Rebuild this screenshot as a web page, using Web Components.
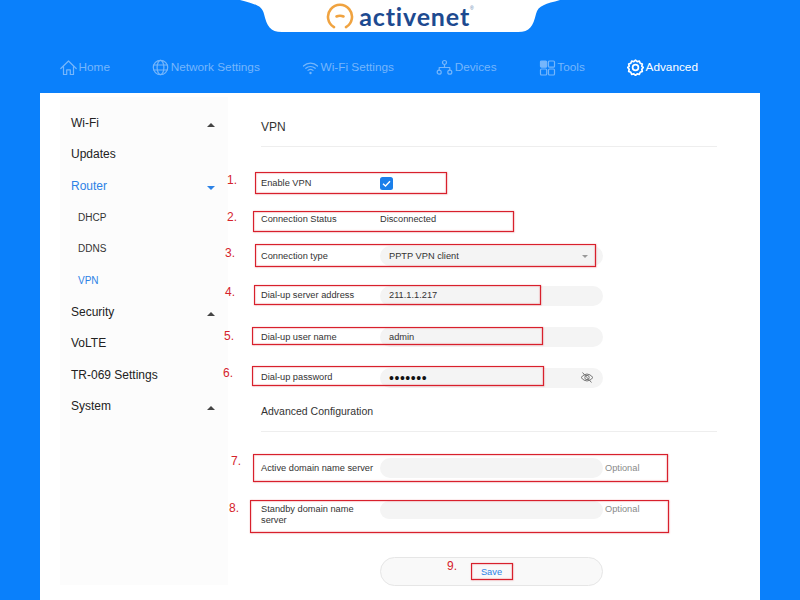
<!DOCTYPE html>
<html lang="en"><head><meta charset="utf-8"><title>activenet VPN</title>
<style>
html,body{margin:0;padding:0;width:800px;height:600px;overflow:hidden;background:#0a80fb;font-family:"Liberation Sans",Arial,sans-serif}
</style></head><body>
<router-page>
  <top-brand></top-brand>
  <top-nav>
    <nav-item icon="home">Home</nav-item>
    <nav-item icon="globe">Network Settings</nav-item>
    <nav-item icon="wifi">Wi-Fi Settings</nav-item>
    <nav-item icon="devices">Devices</nav-item>
    <nav-item icon="tools">Tools</nav-item>
    <nav-item icon="gear" active>Advanced</nav-item>
  </top-nav>
  <main-panel>
    <side-nav slot="side">
      <side-item caret="up">Wi-Fi</side-item>
      <side-item>Updates</side-item>
      <side-item caret="down" active>Router</side-item>
      <side-item sub>DHCP</side-item>
      <side-item sub>DDNS</side-item>
      <side-item sub active>VPN</side-item>
      <side-item caret="up">Security</side-item>
      <side-item>VoLTE</side-item>
      <side-item>TR-069 Settings</side-item>
      <side-item caret="up">System</side-item>
    </side-nav>
    <section-title style="margin-top:24px;height:29px;font-size:12px">VPN</section-title>
    <form-row style="margin-top:26px">Enable VPN<check-mark slot="control"></check-mark></form-row>
    <form-row style="margin-top:16px">Connection Status<span slot="control">Disconnected</span></form-row>
    <form-row style="margin-top:17px">Connection type<pill-field slot="control" value="PPTP VPN client" end="arrow"></pill-field></form-row>
    <form-row style="margin-top:19px;height:21px">Dial-up server address<pill-field slot="control" value="211.1.1.217"></pill-field></form-row>
    <form-row style="margin-top:21px">Dial-up user name<pill-field slot="control" value="admin"></pill-field></form-row>
    <form-row style="margin-top:20px;height:21px">Dial-up password<pill-field slot="control" value="•••••••" end="eye" secret></pill-field></form-row>
    <section-title style="margin-top:13px;height:30px;font-size:10.5px">Advanced Configuration</section-title>
    <form-row style="margin-top:26px">Active domain name server<pill-field slot="control"></pill-field><span slot="hint">Optional</span></form-row>
    <form-row top style="margin-top:23px;height:28px">Standby domain name server<pill-field slot="control" style="height:18px"></pill-field><span slot="hint">Optional</span></form-row>
    <save-button style="margin-top:28px">Save</save-button>
  </main-panel>
  <note-box style="left:255px;top:172px;width:192px;height:22px"></note-box>
  <note-box style="left:253px;top:211px;width:261px;height:21px"></note-box>
  <note-box style="left:255px;top:244px;width:341px;height:23px"></note-box>
  <note-box style="left:254px;top:285px;width:287px;height:20px"></note-box>
  <note-box style="left:252px;top:327px;width:291px;height:18px"></note-box>
  <note-box style="left:252px;top:366px;width:292px;height:20px"></note-box>
  <note-box style="left:253px;top:454px;width:415px;height:28px"></note-box>
  <note-box style="left:250px;top:500px;width:419px;height:33px"></note-box>
  <note-box style="left:471px;top:563px;width:42px;height:17px"></note-box>
  <note-num style="left:227px;top:173px">1.</note-num>
  <note-num style="left:227px;top:210px">2.</note-num>
  <note-num style="left:225px;top:246px">3.</note-num>
  <note-num style="left:225px;top:285px">4.</note-num>
  <note-num style="left:224px;top:329px">5.</note-num>
  <note-num style="left:223px;top:366px">6.</note-num>
  <note-num style="left:231px;top:454px">7.</note-num>
  <note-num style="left:229px;top:501px">8.</note-num>
  <note-num style="left:447px;top:559px">9.</note-num>
</router-page>
<script>
const ICONS={
home:'<path d="M.8 9.5 8.500 2 16.200 9.500"/><path d="M3.500 7.500v8h3.200v-4.600h3.600v4.600h3.200v-8"/>',
globe:'<circle cx="8.5" cy="8.5" r="7.2"/><ellipse cx="8.5" cy="8.5" rx="3.4" ry="7.2"/><path d="M1.800 6h13.400M1.800 11h13.400"/>',
wifi:'<path d="M1.500 7a10 10 0 0 1 14 0M3.800 9.300a7 7 0 0 1 9.400 0M6 11.400a4 4 0 0 1 5 0"/><circle cx="8.500" cy="14" r="1.200" fill="currentColor" stroke="none"/>',
devices:'<circle cx="8.500" cy="3.500" r="2"/><circle cx="3.200" cy="13.200" r="2"/><circle cx="13.800" cy="13.200" r="2"/><path d="M8.500 5.500v3M3.200 11.200V8.500h10.600v2.700"/>',
tools:'<rect x="1.500" y="2" width="6.200" height="6.200" rx="1" fill="currentColor"/><rect x="9.500" y="2" width="6" height="6.200" rx="1"/><rect x="1.500" y="10" width="6.200" height="6" rx="1"/><rect x="9.500" y="10" width="6" height="6" rx="1"/>',
gear:'<path stroke-width="1.700" d="M8.500 1.200l1.700 1.500 2.200-.5.800 2.100 2.100.8-.5 2.200 1.500 1.200-1.500 1.700.5 2.200-2.100.8-.8 2.100-2.200-.5-1.700 1.500-1.700-1.500-2.200.5-.8-2.100-2.100-.8.5-2.200L.7 8.500l1.500-1.200-.5-2.200 2.100-.8.800-2.100 2.200.5z"/><circle cx="8.500" cy="8.500" r="2.900" stroke-width="1.700"/>'
};
function def(name,css,html){
  customElements.define(name,class extends HTMLElement{
    constructor(){super();this.attachShadow({mode:'open'});}
    connectedCallback(){
      const body=typeof html==='function'?html(this):html;
      this.shadowRoot.innerHTML='<style>'+css+'</style>'+body;
    }
  });
}
def('router-page',':host{display:block;position:relative;width:800px;height:600px;overflow:hidden;background:#0a80fb}','<slot></slot>');
def('top-brand',`:host{display:flex;justify-content:center;height:32px}
.n{position:relative;width:320px;height:32px;display:flex;justify-content:center;align-items:center;gap:5px}
svg.bg{position:absolute;inset:0}
svg.m{position:relative}
b{position:relative;font:700 25px/32px "Lato","Liberation Sans",sans-serif;color:#1d4a90;letter-spacing:.85px}
i{position:relative;font:normal 5px/1 "Liberation Sans",sans-serif;color:#5a7ba8;margin:-16px 0 0 -5px}`,
`<div class="n"><svg class="bg" width="320" height="32" viewBox="0 0 320 32"><path fill="#fff" d="M0 0C14 4 22 5 24 14 27 26 30 32 42 32H278C290 32 293 26 296 14 298 5 306 4 320 0z"/></svg>
<svg class="m" width="28" height="28" viewBox="0 0 28 28" fill="none" stroke="#f0a340" stroke-width="2.600" stroke-linecap="round"><path d="M8 25.200A12 12 0 1 1 20 25.200"/><path d="M10.500 14.500q3.500-1.600 7 0"/></svg>
<b>activenet</b><i>®</i></div>`);
def('top-nav',':host{display:flex;justify-content:space-between;align-items:center;height:61px;padding:9px 102px 0 60px;box-sizing:border-box;width:800px}','<slot></slot>');
def('nav-item',`:host{display:flex;align-items:center;gap:1.5px;font-size:11.8px;color:#76b6fb;white-space:nowrap}
:host([active]){color:#fff}svg{display:block}`,
el=>`<svg width="17" height="17" viewBox="0 0 17 17" fill="none" stroke="currentColor" stroke-width="1.200" stroke-linejoin="round" stroke-linecap="round">${ICONS[el.getAttribute('icon')]}</svg><slot></slot>`);
def('main-panel',`:host{display:flex;width:720px;height:507px;margin-left:40px;background:#fff;box-sizing:border-box}
.s{padding:4px 0 0 20px;flex:none;width:188px;box-sizing:border-box;display:flex}
.c{flex:1;display:flex;flex-direction:column;padding-left:33px;padding-right:43px;min-width:0}`,
'<div class="s"><slot name="side"></slot></div><div class="c"><slot></slot></div>');
def('side-nav',':host{display:block;width:168px;height:488px;background:#fcfcfc;padding-top:10px;box-sizing:border-box}','<slot></slot>');
def('side-item',`:host{display:flex;align-items:center;justify-content:space-between;height:31.5px;padding:0 13px 0 11px;font-size:12px;color:#222;box-sizing:border-box}
:host([sub]){font-size:10px;padding-left:18px;color:#333}
:host([active]){color:#2c82e6}
i{width:0;height:0;border-left:4px solid transparent;border-right:4px solid transparent;margin-top:4px}
.up{border-bottom:4px solid #444}.down{border-top:4px solid #2c82e6}`,
el=>{const c=el.getAttribute('caret');return `<span><slot></slot></span>${c?`<i class="${c}"></i>`:''}`});
def('section-title',':host{display:block;box-sizing:content-box;font-size:11px;line-height:20px;color:#333;border-bottom:1px solid #eee;flex:none}','<slot></slot>');
def('form-row',`:host{display:grid;grid-template-columns:119px 223px auto;height:20px;align-items:center;font-size:9.25px;line-height:10.5px;color:#333;flex:none}
:host([top]){align-items:start}
:host([top]) .l{padding-top:3px;width:108px}
:host([top]) .h{padding-top:3px}
.l{width:116px}.h{padding-left:2px;color:#8a8a8a}`,
'<div class="l"><slot></slot></div><div class="f"><slot name="control"></slot></div><div class="h"><slot name="hint"></slot></div>');
def('pill-field',`:host{display:flex;align-items:center;justify-content:space-between;height:20px;border-radius:10px;background:#f4f4f4;padding:0 9px;box-sizing:border-box;color:#333;font-size:9.25px;width:223px}
svg{display:block}
:host([secret]) span{font-size:14px;letter-spacing:.55px;color:#111;line-height:10px}
.a{width:0;height:0;border-left:3.500px solid transparent;border-right:3.500px solid transparent;border-top:3.500px solid #999;margin-right:6px}`,
el=>{const e=el.getAttribute('end');const end=e==='arrow'?'<i class="a"></i>':e==='eye'?'<svg width="14" height="13" viewBox="0 0 14 13" fill="none" stroke="#777" stroke-width="1"><path d="M1 6.500Q7 -.5 13 6.500 7 13.500 1 6.500z"/><circle cx="7" cy="6.500" r="2.200"/><path d="M2.500 1.500 11.500 11.500"/></svg>':'';return `<span>${el.getAttribute('value')||''}</span>${end}`});
def('check-mark',`:host{display:block;width:13px;height:13px;border-radius:2.500px;background:#1a7fea}svg{display:block}`,
'<svg width="13" height="13" viewBox="0 0 13 13" fill="none" stroke="#fff" stroke-width="1.400"><path d="M3 6.800 5.500 9 10 4.200"/></svg>');
def('save-button',`:host{display:flex;align-items:center;justify-content:center;box-sizing:border-box;width:223px;height:29px;margin-left:119px;border:1px solid #e6e6e6;border-radius:15px;background:#f9f9f9;color:#2c82e6;font-size:9.25px;flex:none}`,'<slot></slot>');
def('note-box',':host{position:absolute;display:block;box-sizing:border-box;border:1px solid #d8202c;box-shadow:0 0 1.500px .5px rgba(216,32,44,.6),inset 0 0 1px .5px rgba(216,32,44,.35)}','');
def('note-num',':host{position:absolute;display:block;color:#d5232c;font:12px/14px "Liberation Sans",sans-serif}','<slot></slot>');
</script>
</body></html>
